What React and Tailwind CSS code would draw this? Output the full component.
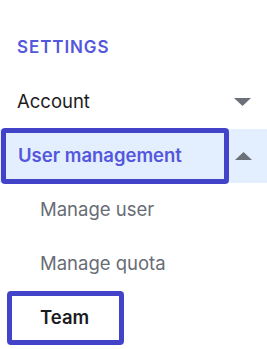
import React from "react";

function Caret({ up }) {
    return (
        <svg width="17" height="8" viewBox="0 0 17 8" className="shrink-0">
            {up ? (
                <polygon points="0,8 8.5,0 17,8" fill="#6b7079" />
            ) : (
                <polygon points="0,0 17,0 8.5,8" fill="#6b7079" />
            )}
        </svg>
    );
}

export default function App() {
    return (
        <div className="w-[267px] h-[349px] bg-white overflow-hidden" style={{ fontFamily: "Inter, 'Noto Sans', sans-serif" }}>
            <div className="pt-[36px] pl-[17px] h-[75px]">
                <h2 className="text-[17px] leading-[22px] font-semibold tracking-[0.9px] text-[#5457dc]">SETTINGS</h2>
            </div>

            <div className="h-[54px] flex items-center justify-between pl-[17px] pr-[16px]">
                <span className="text-[18.5px] text-[#1c1c1e]">Account</span>
                <Caret />
            </div>

            <div className="h-[54px] flex items-center justify-between bg-[#e3eeff] pr-[15px]">
                <div className="ml-px -my-px h-[56px] w-[228px] border-[5px] border-[#4343c9] rounded-[4px] flex items-center pl-[12px]">
                    <span className="text-[18.5px] font-semibold text-[#5457dc]">User management</span>
                </div>
                <Caret up />
            </div>

            <div className="h-[54px] flex items-center pl-[40px]">
                <span className="text-[18.5px] text-[#676c75]">Manage user</span>
            </div>

            <div className="h-[54px] flex items-center pl-[40px]">
                <span className="text-[18.5px] text-[#676c75]">Manage quota</span>
            </div>

            <div className="h-[54px] flex items-center">
                <div className="ml-[7px] h-[54px] w-[117px] border-[5px] border-[#4343c9] rounded-[4px] flex items-center pl-[28px]">
                    <span className="text-[18.5px] font-semibold text-[#1c1c1e]">Team</span>
                </div>
            </div>
        </div>
    );
}
